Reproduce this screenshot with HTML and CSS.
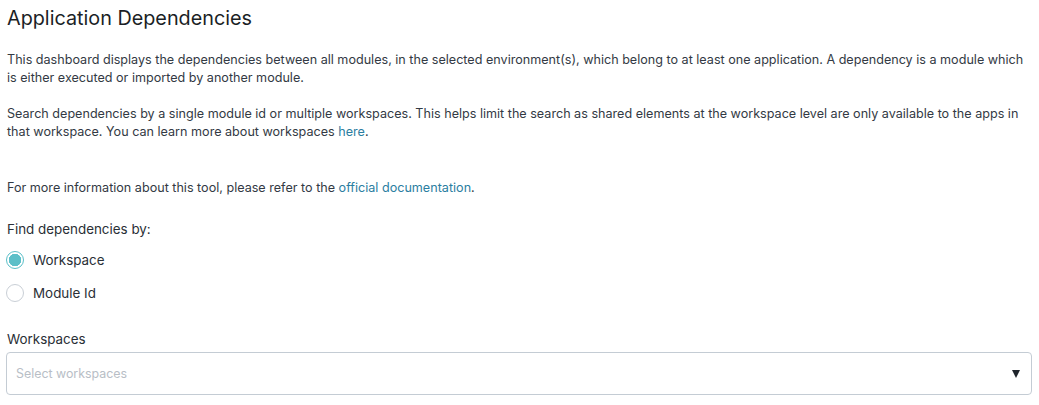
FILE: index.html
```html
<!DOCTYPE html>
<html lang="en">
<head>
<meta charset="utf-8">
<title>Application Dependencies</title>
<link rel="stylesheet" href="styles.css">
</head>
<body>
<main class="page">
  <h1 class="title">Application Dependencies</h1>
  <p class="text">This dashboard displays the dependencies between all modules, in the selected environment(s), which belong to at least one application. A dependency is a module which is either executed or imported by another module.</p>
  <p class="text">Search dependencies by a single module id or multiple workspaces. This helps limit the search as shared elements at the workspace level are only available to the apps in that workspace. You can learn more about workspaces <a class="link" href="#">here</a>.</p>
  <p class="text info">For more information about this tool, please refer to the <a class="link" href="#">official documentation</a>.</p>
  <div class="field">
    <div class="field-label radio-label">Find dependencies by:</div>
    <label class="radio"><span class="radio-dot checked"></span><span>Workspace</span></label>
    <label class="radio"><span class="radio-dot"></span><span>Module Id</span></label>
  </div>
  <div class="field select-field">
    <div class="field-label">Workspaces</div>
    <div class="select">
      <span class="placeholder">Select workspaces</span>
      <span class="caret"></span>
    </div>
  </div>
</main>
</body>
</html>
```
FILE: styles.css
```css
* { box-sizing: border-box; }
html, body { margin: 0; padding: 0; background: #fff; }
body {
  font-family: Inter, "Noto Sans", "Liberation Sans", sans-serif;
  color: #333a44;
}
.page {
  padding: 5px 7px 0 7px;
  width: 1039px;
}
.title {
  font-size: 19.8px;
  font-weight: 400;
  color: #1b1f26;
  margin: 0 0 20px 0;
  line-height: 26px;
}
.text {
  font-size: 12.6px;
  line-height: 18px;
  margin: 0 0 18px 0;
}
.text.info { margin-top: 38px; margin-bottom: 22px; }
.link { color: #2b7ea1; text-decoration: none; }
.field { display: flex; flex-direction: column; }
.field-label {
  font-size: 13.4px;
  line-height: 20px;
  color: #2a2f36;
  margin-bottom: 3px;
}
.radio-label { margin-bottom: 11px; }
.radio {
  display: flex;
  align-items: center;
  gap: 9px;
  font-size: 13.4px;
  line-height: 20px;
  color: #2a2f36;
  height: 20px;
  margin-bottom: 13px;
  margin-left: -1px;
}
.radio-dot {
  width: 18px;
  height: 18px;
  border-radius: 50%;
  border: 1px solid #c9cfd6;
  background: #fff;
  flex: none;
}
.radio-dot.checked {
  border-color: #5bbfc8;
  background: radial-gradient(circle, #5bbfc8 0 6px, #fff 6.5px);
}
.select-field { margin-top: 13px; }
.select {
  margin-left: -1px;
  height: 43px;
  border: 1px solid #c4ccd4;
  border-radius: 4px;
  display: flex;
  align-items: center;
  justify-content: space-between;
  padding: 0 11px 0 9px;
}
.placeholder { font-size: 12.4px; color: #b8bec6; }
.caret {
  width: 0; height: 0;
  border-left: 4.5px solid transparent;
  border-right: 4.5px solid transparent;
  border-top: 8px solid #1f242b;
}
```
